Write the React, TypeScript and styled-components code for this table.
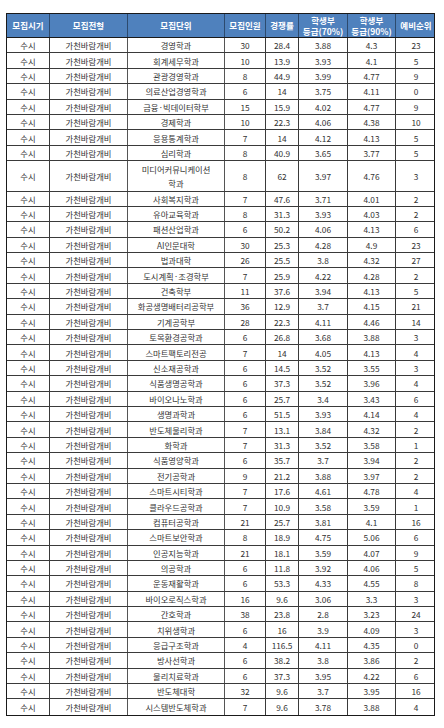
import React from "react";
import styled, { createGlobalStyle } from "styled-components";

const Global = createGlobalStyle`
  html, body { margin: 0; padding: 0; background: #ffffff; }
  body { font-family: "Noto Sans CJK KR", "Noto Sans", sans-serif; }
`;

const COLS = "43px 78px 97px 41px 33px 49px 48px 40px";

const Page = styled.div`
  padding: 13px 0 0 6px;
  width: 444px;
  height: 728px;
  box-sizing: border-box;
`;

const Table = styled.div`
  display: flex;
  flex-direction: column;
  width: 429px;
  box-sizing: border-box;
  border: 1.5px solid #1a1a1a;
`;

const HeaderRow = styled.div`
  display: grid;
  grid-template-columns: ${COLS};
  height: 23px;
  background: #4f81bd;
  border-bottom: 1.5px solid #1a1a1a;
`;

const HeaderCell = styled.div`
  display: flex;
  align-items: center;
  justify-content: center;
  text-align: center;
  color: #ffffff;
  font-weight: 700;
  font-size: 8.5px;
  line-height: 10.5px;
  border-right: 1px solid #2c4a6e;
  white-space: pre-line;
  &:last-child { border-right: none; }
`;

const Row = styled.div<{ $tall?: boolean }>`
  display: grid;
  grid-template-columns: ${COLS};
  height: ${(p) => (p.$tall ? 30.4 : 15.4)}px;
  box-sizing: border-box;
  border-bottom: 1px solid #3a3a3a;
  &:last-child { border-bottom: none; }
`;

const Cell = styled.div<{ $thick?: boolean }>`
  display: flex;
  align-items: center;
  justify-content: center;
  text-align: center;
  color: #333333;
  font-size: 8.3px;
  line-height: 12px;
  border-right: ${(p) => (p.$thick ? "1.5px solid #555" : "1px solid #3a3a3a")};
  overflow: hidden;
  &:last-child { border-right: none; }
`;

const Unit = styled.span`
  white-space: pre-line;
  line-height: 14px;
`;

const headers = [
  "모집시기",
  "모집전형",
  "모집단위",
  "모집인원",
  "경쟁률",
  "학생부\n등급(70%)",
  "학생부\n등급(90%)",
  "예비순위",
];

type R = [string, string, string, string, string, string];

const rows: R[] = [
  ["경영학과", "30", "28.4", "3.88", "4.3", "23"],
  ["회계세무학과", "10", "13.9", "3.93", "4.1", "5"],
  ["관광경영학과", "8", "44.9", "3.99", "4.77", "9"],
  ["의료산업경영학과", "6", "14", "3.75", "4.11", "0"],
  ["금융·빅데이터학부", "15", "15.9", "4.02", "4.77", "9"],
  ["경제학과", "10", "22.3", "4.06", "4.38", "10"],
  ["응용통계학과", "7", "14", "4.12", "4.13", "5"],
  ["심리학과", "8", "40.9", "3.65", "3.77", "5"],
  ["미디어커뮤니케이션\n학과", "8", "62", "3.97", "4.76", "3"],
  ["사회복지학과", "7", "47.6", "3.71", "4.01", "2"],
  ["유아교육학과", "8", "31.3", "3.93", "4.03", "2"],
  ["패션산업학과", "6", "50.2", "4.06", "4.13", "6"],
  ["AI인문대학", "30", "25.3", "4.28", "4.9", "23"],
  ["법과대학", "26", "25.5", "3.8", "4.32", "27"],
  ["도시계획·조경학부", "7", "25.9", "4.22", "4.28", "2"],
  ["건축학부", "11", "37.6", "3.94", "4.13", "5"],
  ["화공생명배터리공학부", "36", "12.9", "3.7", "4.15", "21"],
  ["기계공학부", "28", "22.3", "4.11", "4.46", "14"],
  ["토목환경공학과", "6", "26.8", "3.68", "3.88", "3"],
  ["스마트팩토리전공", "7", "14", "4.05", "4.13", "4"],
  ["신소재공학과", "6", "14.5", "3.52", "3.55", "3"],
  ["식품생명공학과", "6", "37.3", "3.52", "3.96", "4"],
  ["바이오나노학과", "6", "25.7", "3.4", "3.43", "6"],
  ["생명과학과", "6", "51.5", "3.93", "4.14", "4"],
  ["반도체물리학과", "7", "13.1", "3.84", "4.32", "2"],
  ["화학과", "7", "31.3", "3.52", "3.58", "1"],
  ["식품영양학과", "6", "35.7", "3.7", "3.94", "2"],
  ["전기공학과", "9", "21.2", "3.88", "3.97", "2"],
  ["스마트시티학과", "7", "17.6", "4.61", "4.78", "4"],
  ["클라우드공학과", "7", "10.9", "3.58", "3.59", "1"],
  ["컴퓨터공학과", "21", "25.7", "3.81", "4.1", "16"],
  ["스마트보안학과", "8", "18.9", "4.75", "5.06", "6"],
  ["인공지능학과", "21", "18.1", "3.59", "4.07", "9"],
  ["의공학과", "6", "11.8", "3.92", "4.06", "5"],
  ["운동재활학과", "6", "53.3", "4.33", "4.55", "8"],
  ["바이오로직스학과", "16", "9.6", "3.06", "3.3", "3"],
  ["간호학과", "38", "23.8", "2.8", "3.23", "24"],
  ["치위생학과", "6", "16", "3.9", "4.09", "3"],
  ["응급구조학과", "4", "116.5", "4.11", "4.35", "0"],
  ["방사선학과", "6", "38.2", "3.8", "3.86", "2"],
  ["물리치료학과", "6", "37.3", "3.95", "4.22", "6"],
  ["반도체대학", "32", "9.6", "3.7", "3.95", "16"],
  ["시스템반도체학과", "7", "9.6", "3.78", "3.88", "4"],
];

export default function App() {
  return (
    <>
      <Global />
      <Page>
        <Table>
          <HeaderRow>
            {headers.map((h) => (
              <HeaderCell key={h}>{h}</HeaderCell>
            ))}
          </HeaderRow>
          {rows.map((r, i) => {
            const tall = r[0].includes("\n");
            return (
              <Row key={i} $tall={tall}>
                <Cell>수시</Cell>
                <Cell $thick>가천바람개비</Cell>
                <Cell $thick>
                  <Unit>{r[0]}</Unit>
                </Cell>
                {r.slice(1).map((v, j) => (
                  <Cell key={j}>{v}</Cell>
                ))}
              </Row>
            );
          })}
        </Table>
      </Page>
    </>
  );
}
